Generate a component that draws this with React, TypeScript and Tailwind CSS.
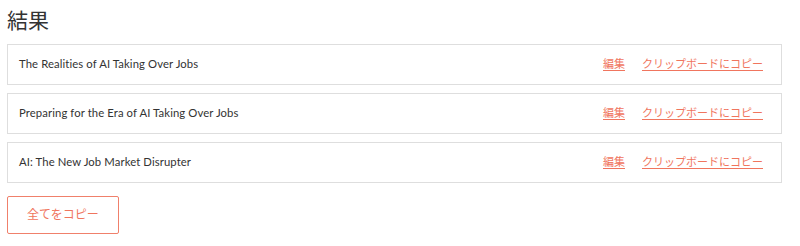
import React from 'react';

const titles = [
  'The Realities of AI Taking Over Jobs',
  'Preparing for the Era of AI Taking Over Jobs',
  'AI: The New Job Market Disrupter',
];

const ResultRow = ({ title }: { title: string }) => (
  <div className="flex h-[41px] items-center justify-between border border-[#dedede] bg-white pl-[11px] pr-[18px]">
    <span className="text-[11.3px] tracking-[0.1px] text-[#333]">{title}</span>
    <div className="flex items-center gap-[17px] text-[11px] text-[#f0755e]">
      <a href="#" className="underline underline-offset-2">編集</a>
      <a href="#" className="underline underline-offset-2">クリップボードにコピー</a>
    </div>
  </div>
);

export default function App() {
  return (
    <div
      className="min-h-screen bg-white pl-[7px] pt-[6px]"
      style={{ fontFamily: 'Lato, "Noto Sans CJK JP", sans-serif' }}
    >
      <h2 className="text-[21px] leading-[28px] text-[#333]">結果</h2>
      <div className="mt-[10px] flex w-[775px] flex-col gap-[8px]">
        {titles.map((t) => (
          <ResultRow key={t} title={t} />
        ))}
      </div>
      <button className="mt-[13px] h-[38px] w-[112px] rounded-[2px] border border-[#f0806b] text-[12px] text-[#f0755e]">
        全てをコピー
      </button>
    </div>
  );
}
